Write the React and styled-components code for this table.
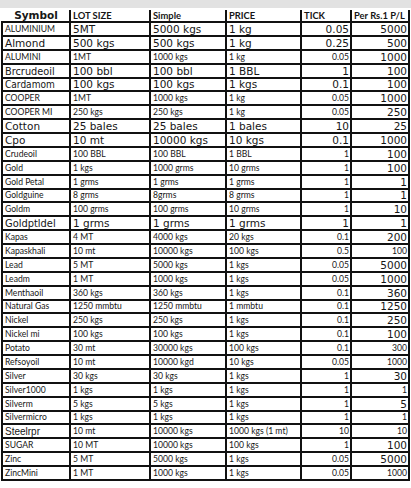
import React from "react";
import styled, { createGlobalStyle } from "styled-components";

const Global = createGlobalStyle`
  html, body { margin: 0; padding: 0; background: #ffffff; }
  body { width: 411px; height: 488px; overflow: hidden; }
`;

const COLS = "70px 80px 76px 75px 50px 58px";

const Page = styled.div`
  width: 411px;
  height: 488px;
  background: #ffffff;
  display: flex;
  flex-direction: column;
`;

const TopBand = styled.div`
  height: 8px;
  background: #e2e2e2;
  flex: none;
`;

const Sheet = styled.div`
  margin: 2px 0 0 1px;
  display: flex;
  flex-direction: column;
`;

const Row = styled.div`
  display: grid;
  grid-template-columns: ${COLS};
  height: ${(p) => (p.$head ? "13px" : "13.88px")};
`;

const Cell = styled.div`
  box-sizing: border-box;
  border-right: 2px solid #111;
  border-bottom: 2px solid #111;
  border-left: ${(p) => (p.$first && !p.$head ? "2px solid #111" : "none")};
  display: flex;
  align-items: flex-end;
  justify-content: ${(p) => (p.$center ? "center" : p.$right ? "flex-end" : "flex-start")};
  padding: ${(p) => (p.$right ? "0 1px 0 0" : "0 0 0 2px")};
  overflow: hidden;
  white-space: nowrap;
  color: #161616;
  font-family: ${(p) =>
    p.$font === "b"
      ? '"DejaVu Sans", Verdana, sans-serif'
      : p.$font === "a"
      ? '"Liberation Sans", Arial, sans-serif'
      : 'Lato, "Open Sans", sans-serif'};
  font-size: ${(p) =>
    p.$font === "b" ? "10.5px" : p.$font === "a" ? "10px" : p.$head ? "9.4px" : "8.6px"};
  font-weight: ${(p) => (p.$bold ? 700 : 400)};
  line-height: ${(p) => (p.$font === "b" ? "12px" : "11px")};
`;

const Squeeze = styled.span`
  display: inline-block;
  transform: scaleX(${(p) => p.$sx});
  transform-origin: left bottom;
`;

const header = [
  { t: "Symbol", f: "b", c: true },
  { t: "LOT SIZE", f: "s" },
  { t: "Simple", f: "s" },
  { t: "PRICE", f: "s" },
  { t: "TICK", f: "s" },
  { t: "Per Rs.1 P/L", f: "s" },
];

const squeeze = { Brcrudeoil: 0.93, Cardamom: 0.86, Goldptldel: 0.94 };

const rows = [
  ["ALUMINIUM", "5MT", "5000 kgs", "1 kg", "0.05", "5000", "sbbbbb"],
  ["Almond", "500 kgs", "500 kgs", "1 kg", "0.25", "500", "bbbbbb"],
  ["ALUMINI", "1MT", "1000 kgs", "1 kg", "0.05", "1000", "sssssb"],
  ["Brcrudeoil", "100 bbl", "100 bbl", "1 BBL", "1", "100", "bbbbbb"],
  ["Cardamom", "100 kgs", "100 kgs", "1 kgs", "0.1", "100", "bbbbbb"],
  ["COOPER", "1MT", "1000 kgs", "1 kg", "0.05", "1000", "sssssb"],
  ["COOPER MI", "250 kgs", "250 kgs", "1 kg", "0.05", "250", "sssssb"],
  ["Cotton", "25 bales", "25 bales", "1 bales", "10", "25", "bbbbbb"],
  ["Cpo", "10 mt", "10000 kgs", "10 kgs", "0.1", "1000", "bbbbbb"],
  ["Crudeoil", "100 BBL", "100 BBL", "1 BBL", "1", "100", "sssssb"],
  ["Gold", "1 kgs", "1000 grms", "10 grms", "1", "100", "sssssb"],
  ["Gold Petal", "1 grms", "1 grms", "1 grms", "1", "1", "sssssb"],
  ["Goldguine", "8 grms", "8grms", "8 grms", "1", "1", "sssssb"],
  ["Goldm", "100 grms", "100 grms", "10 grms", "1", "10", "sssssb"],
  ["Goldptldel", "1 grms", "1 grms", "1 grms", "1", "1", "bbbbbb"],
  ["Kapas", "4 MT", "4000 kgs", "20 kgs", "0.1", "200", "sssssb"],
  ["Kapaskhali", "10 mt", "10000 kgs", "100 kgs", "0.5", "100", "ssssss"],
  ["Lead", "5 MT", "5000 kgs", "1 kgs", "0.05", "5000", "sssssb"],
  ["Leadm", "1 MT", "1000 kgs", "1 kgs", "0.05", "1000", "sssssb"],
  ["Menthaoil", "360 kgs", "360 kgs", "1 kgs", "0.1", "360", "sssssb"],
  ["Natural Gas", "1250 mmbtu", "1250 mmbtu", "1 mmbtu", "0.1", "1250", "sssssb"],
  ["Nickel", "250 kgs", "250 kgs", "1 kgs", "0.1", "250", "sssssb"],
  ["Nickel mi", "100 kgs", "100 kgs", "1 kgs", "0.1", "100", "sssssb"],
  ["Potato", "30 mt", "30000 kgs", "100 kgs", "0.1", "300", "ssssss"],
  ["Refsoyoil", "10 mt", "10000 kgd", "10 kgs", "0.05", "1000", "ssssss"],
  ["Silver", "30 kgs", "30 kgs", "1 kgs", "1", "30", "sssssb"],
  ["Silver1000", "1 kgs", "1 kgs", "1 kgs", "1", "1", "ssssss"],
  ["Silverm", "5 kgs", "5 kgs", "1 kgs", "1", "5", "sssssb"],
  ["Silvermicro", "1 kgs", "1 kgs", "1 kgs", "1", "1", "ssssss"],
  ["Steelrpr", "10 mt", "10000 kgs", "1000 kgs (1 mt)", "10", "10", "asssss"],
  ["SUGAR", "10 MT", "10000 kgs", "100 kgs", "1", "100", "sssssb"],
  ["Zinc", "5 MT", "5000 kgs", "1 kgs", "0.05", "5000", "sssssb"],
  ["ZincMini", "1 MT", "1000 kgs", "1 kgs", "0.05", "1000", "ssssss"],
];

export default function App() {
  return (
    <Page>
      <Global />
      <TopBand />
      <Sheet>
        <Row $head>
          {header.map((h, i) => (
            <Cell key={i} $head $first={i === 0} $font={h.f} $bold $center={h.c}>
              {h.t}
            </Cell>
          ))}
        </Row>
        {rows.map((r, ri) => (
          <Row key={ri}>
            {r.slice(0, 6).map((v, ci) => (
              <Cell key={ci} $first={ci === 0} $font={r[6][ci]} $right={ci >= 4}>
                {ci === 0 && squeeze[v] ? <Squeeze $sx={squeeze[v]}>{v}</Squeeze> : v}
              </Cell>
            ))}
          </Row>
        ))}
      </Sheet>
    </Page>
  );
}
